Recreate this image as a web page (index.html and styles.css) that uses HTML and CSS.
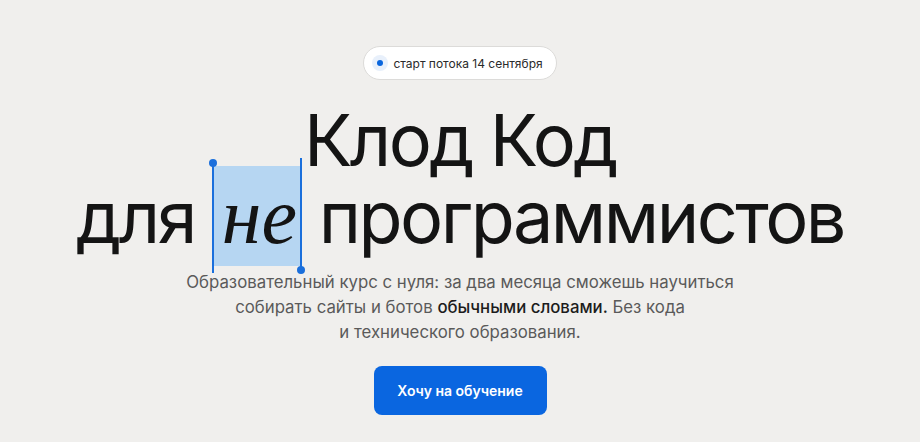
FILE: index.html
```html
<!DOCTYPE html>
<html lang="ru">
<head>
    <meta charset="UTF-8">
    <meta name="viewport" content="width=device-width, initial-scale=1.0">
    <title>Клод Код для не программистов</title>
    <link rel="stylesheet" href="styles.css">
</head>
<body>
    <section class="hero">
        <div class="badge">
            <span class="badge-dot"></span>
            старт потока 14 сентября
        </div>

        <h1 class="hero-title">
            Клод Код<br>
            для <span class="selected"><span class="caret caret-start"></span>не<span class="caret caret-end"></span></span> программистов
        </h1>

        <p class="hero-text">
            Образовательный курс с нуля: за два месяца сможешь научиться<br>
            собирать сайты и ботов <strong>обычными словами.</strong> Без кода<br>
            и технического образования.
        </p>

        <button class="cta">Хочу на обучение</button>
    </section>
</body>
</html>
```

FILE: styles.css
```css
/* General Styling */
body {
    margin: 0;
    padding: 0;
    background-color: #f0efed;
    font-family: 'Inter', 'Noto Sans', sans-serif;
    color: #161616;
}

.hero {
    display: flex;
    flex-direction: column;
    align-items: center;
    padding-top: 46px;
    text-align: center;
}

/* Badge */
.badge {
    display: flex;
    align-items: center;
    gap: 5px;
    height: 32px;
    padding: 0 13px 0 8px;
    border: 1px solid #dcdbd9;
    border-radius: 17px;
    background-color: #fff;
    font-size: 12px;
    color: #2a2a2a;
}

.badge-dot {
    width: 16px;
    height: 16px;
    border-radius: 50%;
    background-color: #e8f0fb;
    position: relative;
}

.badge-dot::after {
    content: "";
    position: absolute;
    top: 5px;
    left: 5px;
    width: 6px;
    height: 6px;
    border-radius: 50%;
    background-color: #0a66dd;
}

/* Title */
.hero-title {
    margin: 22px 0 0;
    font-size: 72px;
    font-weight: 400;
    line-height: 76px;
    letter-spacing: -0.035em;
    color: #141414;
}

.selected {
    position: relative;
    display: inline-block;
    padding: 0 4px 0 9px;
    font-family: 'Liberation Serif', 'DejaVu Serif', serif;
    font-style: italic;
    font-size: 80px;
    letter-spacing: 0;
}

.selected::before {
    content: "";
    position: absolute;
    z-index: -1;
    left: 0;
    right: 0;
    top: -12px;
    bottom: -12px;
    background-color: #b6d6f2;
}

/* Selection handles */
.caret {
    position: absolute;
    width: 2px;
    background-color: #1a6fdc;
}

.caret::after {
    content: "";
    position: absolute;
    left: -3px;
    width: 8px;
    height: 8px;
    border-radius: 50%;
    background-color: #1a6fdc;
}

.caret-start {
    left: -1px;
    top: -16px;
    bottom: -19px;
}

.caret-start::after {
    top: -3px;
}

.caret-end {
    right: -1px;
    top: -20px;
    bottom: -17px;
}

.caret-end::after {
    bottom: -3px;
}

/* Paragraph */
.hero-text {
    margin: 15px 0 0;
    font-size: 16.8px;
    line-height: 25px;
    color: #5a5a5a;
}

.hero-text strong {
    font-weight: 500;
    color: #1c1c1c;
}

/* Button */
.cta {
    margin-top: 21px;
    width: 173px;
    height: 49px;
    border: none;
    border-radius: 8px;
    background-color: #0a66e0;
    color: #fff;
    font-family: 'Inter', sans-serif;
    font-size: 14px;
    font-weight: 600;
    cursor: pointer;
}
```
